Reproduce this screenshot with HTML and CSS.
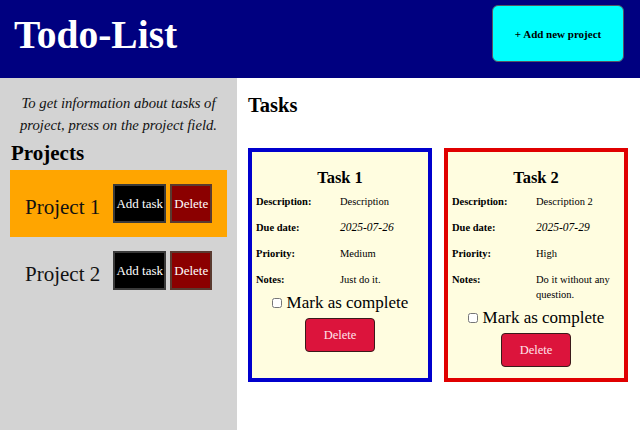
FILE: index.html
```html
<!DOCTYPE html>
<html>
<head>
<meta charset="utf-8">
<link rel="stylesheet" href="styles.css">
</head>
<body>
<header class="header">
  <h1 class="title">Todo-List</h1>
  <button class="add-project">+ Add new project</button>
</header>
<div class="layout">
  <aside class="sidebar">
    <p class="hint">To get information about tasks of project, press on the project field.</p>
    <h2 class="projects-title">Projects</h2>
    <div class="project active">
      <span class="project-name">Project 1</span>
      <button class="btn-add">Add task</button>
      <button class="btn-del">Delete</button>
    </div>
    <div class="project">
      <span class="project-name">Project 2</span>
      <button class="btn-add">Add task</button>
      <button class="btn-del">Delete</button>
    </div>
  </aside>
  <main class="main">
    <h2 class="tasks-title">Tasks</h2>
    <div class="cards">
      <div class="card card-medium">
        <h3 class="card-title">Task 1</h3>
        <div class="rows">
          <span class="label">Description:</span><span class="value">Description</span>
          <span class="label">Due date:</span><span class="value date">2025-07-26</span>
          <span class="label">Priority:</span><span class="value">Medium</span>
          <span class="label">Notes:</span><span class="value">Just do it.</span>
        </div>
        <label class="complete"><input type="checkbox" class="check"> Mark as complete</label>
        <button class="card-del">Delete</button>
      </div>
      <div class="card card-high">
        <h3 class="card-title">Task 2</h3>
        <div class="rows">
          <span class="label">Description:</span><span class="value">Description 2</span>
          <span class="label">Due date:</span><span class="value date">2025-07-29</span>
          <span class="label">Priority:</span><span class="value">High</span>
          <span class="label">Notes:</span><span class="value">Do it without any question.</span>
        </div>
        <label class="complete"><input type="checkbox" class="check"> Mark as complete</label>
        <button class="card-del">Delete</button>
      </div>
    </div>
  </main>
</div>
</body>
</html>
```

FILE: styles.css
```css
* { box-sizing: border-box; }
html, body { margin: 0; padding: 0; height: 100%; }
body {
  font-family: "Liberation Serif", "Times New Roman", serif;
  color: #000;
  background: #fff;
  display: flex;
  flex-direction: column;
}
.header {
  background: #000080;
  height: 78px;
  flex: none;
  display: flex;
  align-items: flex-start;
  justify-content: space-between;
  padding: 0 16px 0 14px;
}
.title {
  margin: 0;
  margin-top: 13px;
  color: #fff;
  font-size: 39.5px;
  font-weight: bold;
  line-height: 44px;
}
.add-project {
  margin-top: 5px;
  width: 132px;
  height: 57px;
  background: #00ffff;
  border: 1px solid #556;
  border-radius: 6px;
  font-family: "Liberation Serif", serif;
  font-weight: bold;
  font-size: 11px;
  color: #000;
  padding: 0;
}
.layout {
  flex: 1;
  display: flex;
}
.sidebar {
  width: 237px;
  flex: none;
  background: #d3d3d3;
  padding: 14px 10px 0 10px;
}
.hint {
  margin: 0;
  font-style: italic;
  font-size: 14.7px;
  line-height: 22px;
  text-align: center;
  color: #111;
}
.projects-title {
  margin: 4px 0 0 1px;
  font-size: 21px;
  line-height: 26px;
}
.project {
  display: flex;
  align-items: center;
  padding: 14px 15px;
  white-space: nowrap;
}
.projects-title + .project { margin-top: 4px; }
.project.active { background: #ffa500; }
.project-name {
  flex: none;
  font-size: 21px;
  margin: 8px 13px 0 0;
  color: #111;
}
.btn-add, .btn-del {
  flex: none;
  white-space: nowrap;
  font-family: "Liberation Serif", serif;
  font-size: 13px;
  color: #fff;
  height: 39px;
  padding: 0;
  border: 2px solid #3a3a3a;
}
.btn-add { background: #000; width: 53px; }
.btn-del { background: #8b0000; width: 42px; margin-left: 4px; border-color: #5a3a30; }
.main {
  flex: 1;
  padding: 0 12px 0 11px;
}
.tasks-title {
  margin: 15px 0 0 0;
  font-size: 20.5px;
  line-height: 24px;
}
.cards {
  margin-top: 31px;
  display: grid;
  grid-template-columns: 1fr 1fr;
  gap: 12px;
}
.card {
  background: #fffde0;
  border: 4px solid #0000cd;
  padding: 16px 4px 11px 4px;
  display: flex;
  flex-direction: column;
  align-items: center;
}
.card-high { border-color: #e00000; }
.card-medium { border-color: #0000cd; }
.card-title {
  margin: 0;
  font-size: 16.5px;
  line-height: 19px;
  text-align: center;
}
.rows {
  align-self: stretch;
  margin-top: 7px;
  display: grid;
  grid-template-columns: 1fr 1fr;
  row-gap: 11px;
  font-size: 10.5px;
  line-height: 15px;
}
.label { font-weight: bold; }
.date { font-style: italic; font-size: 11.5px; }
.complete {
  margin-top: 6px;
  font-size: 17px;
  line-height: 20px;
  display: flex;
  align-items: center;
}
.check {
  width: 10px;
  height: 10px;
  margin: 0 5px 0 0;
}
.card-del {
  margin-top: 5px;
  width: 70px;
  height: 34px;
  background: #dc143c;
  border: 1.5px solid #3a1a1a;
  border-radius: 4px;
  color: #ffe4ea;
  font-family: "Liberation Serif", serif;
  font-size: 12.5px;
}
```
